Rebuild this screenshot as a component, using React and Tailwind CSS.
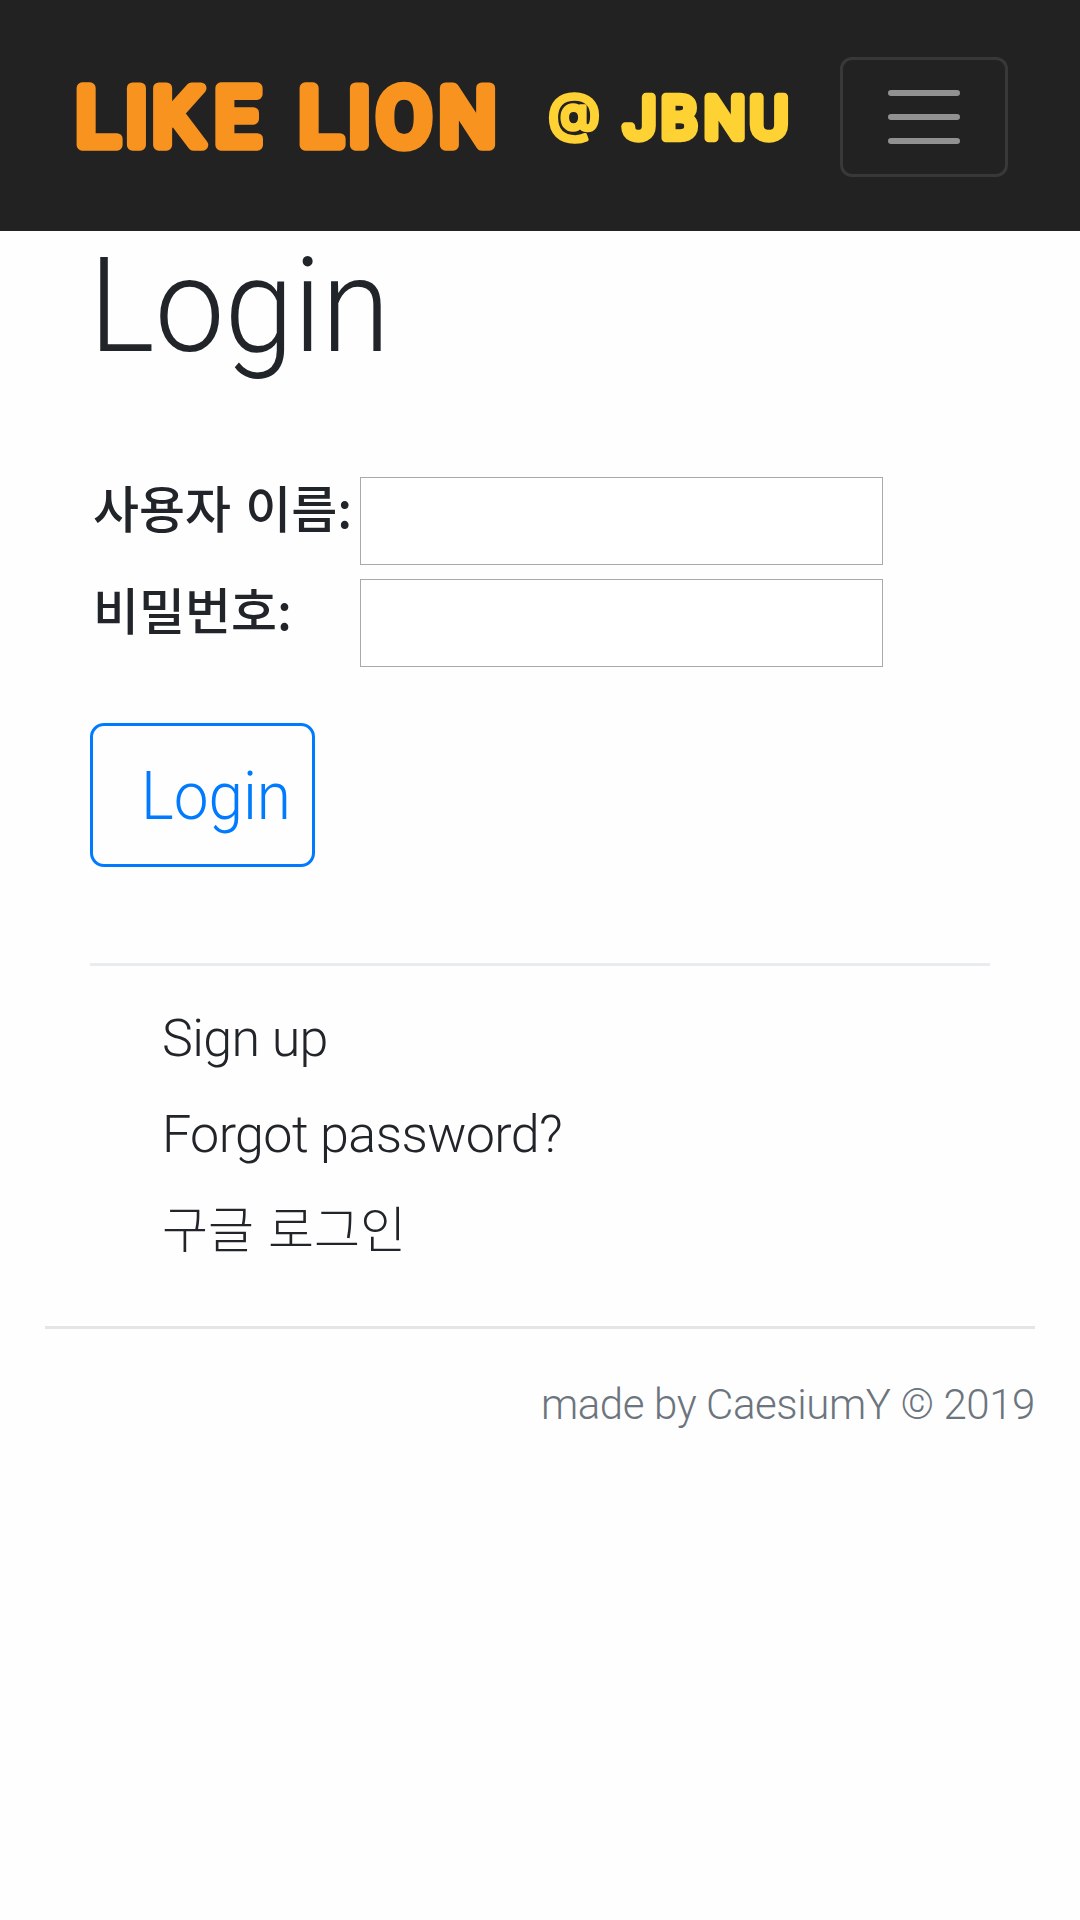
import React from "react";

const FIELDS = [
  { id: "username", label: "사용자 이름:", type: "text" },
  { id: "password", label: "비밀번호:", type: "password" },
];

function Logo() {
  return (
    <svg
      className="block h-[120px] w-[740px] font-['Roboto'] font-normal"
      viewBox="0 0 740 120"
      strokeLinejoin="round"
      strokeLinecap="round"
    >
      <g fill="#f7931e" stroke="#f7931e" strokeWidth="11.5" fontSize="80">
        <text y="88" x="15.8 65.6 92.3 154.6 238.8 288.6 316.4 378.9">LIKELION</text>
      </g>
      <g fill="#ffd234" stroke="#ffd234">
        <text className="font-['Inter'] font-semibold" x="488" y="73.5" fontSize="52" strokeWidth="3.5">@</text>
        <text y="81" x="564 601 644 690" strokeWidth="8.5" fontSize="58">JBNU</text>
      </g>
    </svg>
  );
}

function NavBar() {
  return (
    <nav className="flex h-[231px] items-start bg-[#222222] pl-[60px] pt-[57px]">
      <Logo />
      <button
        aria-label="Toggle navigation"
        className="ml-[40px] flex h-[120px] w-[168px] flex-col items-center justify-center gap-[18px] rounded-[12px] border-[3px] border-[#383838]"
      >
        <span className="h-[6px] w-[72px] rounded-[3px] bg-[#919191]" />
        <span className="h-[6px] w-[72px] rounded-[3px] bg-[#919191]" />
        <span className="h-[6px] w-[72px] rounded-[3px] bg-[#919191]" />
      </button>
    </nav>
  );
}

export default function App() {
  return (
    <div className="min-h-[1920px] bg-[#fefefe] font-['Roboto','Noto_Sans_CJK_KR',sans-serif] font-light text-[#212529]">
      <NavBar />
      <main className="px-[90px]">
        <h1 className="h-[158px] whitespace-nowrap text-[132px] leading-[150px]">
          <span className="-ml-px inline-block origin-left scale-x-[0.943]">Login</span>
        </h1>
        <form className="pt-[88px]">
          {FIELDS.map((f) => (
            <div key={f.id} className="mb-[14px] flex h-[88px]">
              <label htmlFor={f.id} className="w-[270px] whitespace-nowrap pl-[3px] font-['Noto_Sans_CJK_KR',sans-serif] text-[50px] font-medium leading-[59px] [word-spacing:3px]">
                {f.label}
              </label>
              <input id={f.id} type={f.type} className="h-[88px] w-[523px] border border-[#a9a9a9] bg-white outline-none" />
            </div>
          ))}
          <button type="button" className="mt-[56px] flex h-[144px] w-[225px] items-center whitespace-nowrap rounded-[14px] border-[3px] border-[#007bff] pl-[48px] pt-[3px] text-[66px] leading-none text-[#007bff]">
            <span className="inline-block origin-left scale-x-[0.94]">Login</span>
          </button>
        </form>
        <hr className="mt-[96px] border-0 border-t-[3px] border-[#e9ecef]" />
        <ul className="pl-[72px] pt-[25px] text-[52px] leading-[96px] tracking-[-0.6px]">
          <li className="h-[96px]"><a className="inline-block">Sign up</a></li>
          <li className="h-[96px]"><a className="inline-block">Forgot password?</a></li>
          <li className="h-[96px]"><a className="inline-block font-['Noto_Sans_CJK_KR',sans-serif] text-[50px] leading-[83px] tracking-normal [word-spacing:3px]">구글 로그인</a></li>
        </ul>
      </main>
      <footer className="mx-[45px] mt-[47px] border-t-[3px] border-[#e5e5e5] pt-[44px] text-right text-[42px] leading-[64px] tracking-[-0.4px] text-[#6c757d]">
        <span className="inline-block">made by CaesiumY © 2019</span>
      </footer>
    </div>
  );
}
